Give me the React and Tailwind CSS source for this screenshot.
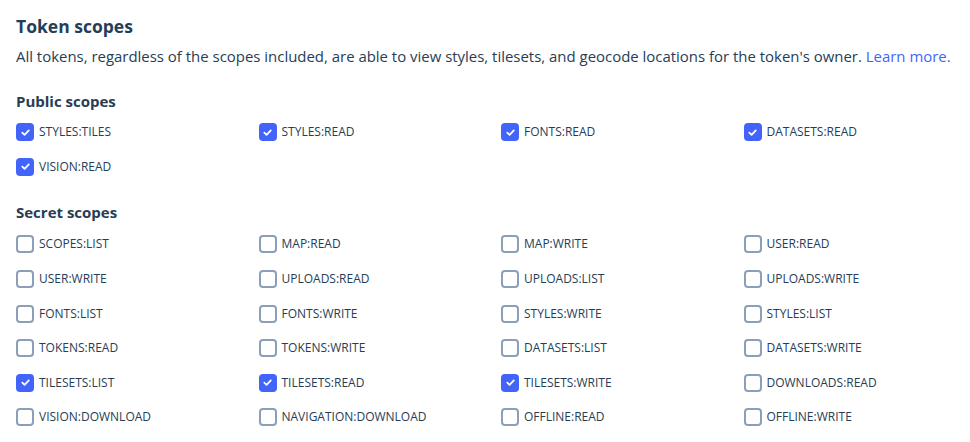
import React from 'react';

const publicScopes = [
  { name: 'STYLES:TILES', checked: true },
  { name: 'STYLES:READ', checked: true },
  { name: 'FONTS:READ', checked: true },
  { name: 'DATASETS:READ', checked: true },
  { name: 'VISION:READ', checked: true },
];

const secretScopes = [
  'SCOPES:LIST', 'MAP:READ', 'MAP:WRITE', 'USER:READ',
  'USER:WRITE', 'UPLOADS:READ', 'UPLOADS:LIST', 'UPLOADS:WRITE',
  'FONTS:LIST', 'FONTS:WRITE', 'STYLES:WRITE', 'STYLES:LIST',
  'TOKENS:READ', 'TOKENS:WRITE', 'DATASETS:LIST', 'DATASETS:WRITE',
  'TILESETS:LIST', 'TILESETS:READ', 'TILESETS:WRITE', 'DOWNLOADS:READ',
  'VISION:DOWNLOAD', 'NAVIGATION:DOWNLOAD', 'OFFLINE:READ', 'OFFLINE:WRITE',
];
const checkedSecret = ['TILESETS:LIST', 'TILESETS:READ', 'TILESETS:WRITE'];

const ScopeCheckbox = ({ name, checked }) => (
  <label className="flex h-[34.6px] items-center gap-[5px] pl-4">
    {checked ? (
      <span className="flex h-[18px] w-[18px] items-center justify-center rounded-[4px] bg-[#4264fb]">
        <svg viewBox="0 0 12 12" className="h-[11px] w-[11px]" fill="none">
          <path d="M2.5 6.2 L5 8.6 L9.6 3.6" stroke="white" strokeWidth="1.9" strokeLinecap="round" strokeLinejoin="round" />
        </svg>
      </span>
    ) : (
      <span className="h-[18px] w-[18px] rounded-[4px] border-2 border-[#8c9fb8] bg-white" />
    )}
    <span className="text-[12px] text-[#273d56]">{name}</span>
  </label>
);

export default function App() {
  return (
    <div className="bg-white pt-[14px] font-['Open_Sans',sans-serif] text-[#273d56]">
      <h2 className="px-4 text-[17.5px] font-bold leading-[24px]">Token scopes</h2>
      <p className="mt-[8px] whitespace-nowrap px-4 text-[14.95px] leading-[20px]">
        All tokens, regardless of the scopes included, are able to view styles, tilesets, and geocode locations for the token's owner.{' '}
        <a className="text-[#4264fb]">Learn more.</a>
      </p>

      <h3 className="mt-[25px] px-4 text-[15px] font-bold leading-[20px]">Public scopes</h3>
      <div className="mt-[4px] grid grid-cols-[repeat(4,242.5px)]">
        {publicScopes.map((s) => (
          <ScopeCheckbox key={s.name} name={s.name} checked={s.checked} />
        ))}
      </div>

      <h3 className="mt-[18px] px-4 text-[15px] font-bold leading-[20px]">Secret scopes</h3>
      <div className="mt-[5px] grid grid-cols-[repeat(4,242.5px)]">
        {secretScopes.map((s) => (
          <ScopeCheckbox key={s} name={s} checked={checkedSecret.includes(s)} />
        ))}
      </div>
    </div>
  );
}
